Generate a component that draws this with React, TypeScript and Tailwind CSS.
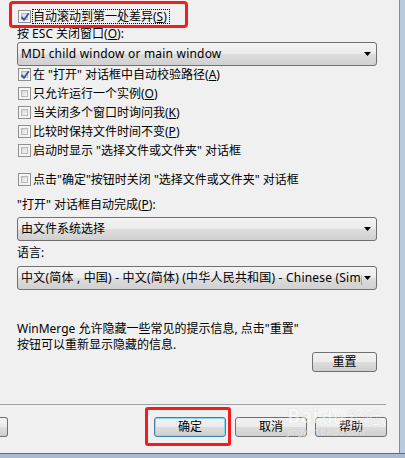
import React from "react";

const U = ({ c }: { c: string }) => <span className="underline underline-offset-[1px]">{c}</span>;

function Checkbox({ checked }: { checked?: boolean }) {
  return (
    <span className="relative block h-[13px] w-[13px] shrink-0 border border-[#8e8f8f] bg-[#f4f4f4]">
      <span className="absolute inset-[2px] border border-[#b8b8b8] bg-[linear-gradient(135deg,#d6d6d6,#f6f6f6)]" />
      {checked && (
        <svg className="absolute left-[1px] top-[1px]" width="10" height="10" viewBox="0 0 10 10">
          <path d="M1.5 5 L4 7.8 L8.8 1.2" fill="none" stroke="#3d56a0" strokeWidth="1.9" />
        </svg>
      )}
    </span>
  );
}

function Row({ checked, children }: { checked?: boolean; children: React.ReactNode }) {
  return (
    <div className="flex h-[19px] items-center pl-[1px]">
      <Checkbox checked={checked} />
      <span className="ml-[2px] whitespace-nowrap leading-[14px]">{children}</span>
    </div>
  );
}

function Select({ children }: { children: React.ReactNode }) {
  return (
    <div className="flex h-[24px] items-center rounded-[3px] border border-[#707070] bg-[linear-gradient(#f3f3f3,#ebebeb_50%,#dddddd_50%,#d0d0d0)] pl-[3px] pr-[5px]">
      <span className="min-w-0 flex-1 overflow-hidden whitespace-nowrap leading-[18px]">{children}</span>
      <svg className="ml-[2px] shrink-0" width="7" height="4" viewBox="0 0 7 4">
        <path d="M0 0H7L3.5 4Z" fill="#000" />
      </svg>
    </div>
  );
}

function Btn({ children, cls = "", focus }: { children?: React.ReactNode; cls?: string; focus?: boolean }) {
  return (
    <div
      className={
        "flex h-[20px] items-center justify-center rounded-[3px] border bg-[linear-gradient(#f2f2f2,#ebebeb_50%,#dddddd_50%,#cfcfcf)] " +
        (focus
          ? "border-[#3c7fb1] shadow-[inset_0_0_0_1px_#8fd7f6] "
          : "border-[#707070] ") +
        cls
      }
    >
      {children}
    </div>
  );
}

export default function App() {
  return (
    <div
      className="flex h-[458px] w-[405px] flex-col overflow-hidden bg-[#f0f0f0] text-[12px] text-black"
      style={{ fontFamily: '"Noto Sans", "Noto Sans CJK SC", sans-serif' }}
    >
      <div className="flex min-h-0 flex-1">
        <div className="relative w-[399px]">
          <div className="pl-[17px] pr-[22px]">
            <div className="mt-[8px] flex h-[17px] items-center pl-[1px]">
              <Checkbox checked />
              <span className="ml-[1px] h-[15px] whitespace-nowrap border border-dotted border-black pr-[2px] leading-[13px]">
                自动滚动到第一处差异(<U c="S" />)
              </span>
            </div>
            <div className="mt-[2px] h-[14px] whitespace-nowrap leading-[14px]">
              按 ESC 关闭窗口(<U c="O" />):
            </div>
            <div className="mt-[1px]">
              <Select>
                <span className="tracking-[0.2px]">MDI child window or main window</span>
              </Select>
            </div>
            <div className="-mt-[1px]">
              <Row checked>
                在 "打开" 对话框中自动校验路径(<U c="A" />)
              </Row>
              <Row>
                只允许运行一个实例(<U c="O" />)
              </Row>
              <Row>
                当关闭多个窗口时询问我(<U c="K" />)
              </Row>
              <Row>
                比较时保持文件时间不变(<U c="P" />)
              </Row>
              <Row>启动时显示 "选择文件或文件夹" 对话框</Row>
            </div>
            <div className="mt-[10px]">
              <Row>点击"确定"按钮时关闭 "选择文件或文件夹" 对话框</Row>
            </div>
            <div className="mt-[9px] h-[14px] whitespace-nowrap leading-[14px]">
              "打开" 对话框自动完成(<U c="P" />):
            </div>
            <div className="mt-[5px]">
              <Select>由文件系统选择</Select>
            </div>
            <div className="mt-[5px] h-[14px] leading-[14px]">语言:</div>
            <div className="mt-[6px]">
              <Select>
                <span className="tracking-[0.2px]">中文(简体 , 中国) - 中文(简体) (中华人民共和国) - Chinese (Simplified, PRC)</span>
              </Select>
            </div>
            <div className="mt-[31px] leading-[16px]">
              <div className="whitespace-nowrap">WinMerge 允许隐藏一些常见的提示信息, 点击"重置"</div>
              <div className="whitespace-nowrap">按钮可以重新显示隐藏的信息.</div>
            </div>
            <div className="-mt-[1px] flex justify-end">
              <Btn cls="w-[65px]">重置</Btn>
            </div>
          </div>
          <div className="mt-[32px] h-px w-[386px] bg-[#a0a0a0]" />
          <div className="mt-[12px] flex">
            <div className="h-[20px] w-[8px] rounded-r-[3px] border border-l-0 border-[#707070] bg-[linear-gradient(#f2f2f2,#ebebeb_50%,#dddddd_50%,#cfcfcf)]" />
            <Btn cls="ml-[146px] w-[72px]" focus>
              确定
            </Btn>
            <Btn cls="ml-[9px] w-[72px]">取消</Btn>
            <Btn cls="ml-[8px] w-[72px]">帮助</Btn>
          </div>

          {/* watermark */}
          <div className="pointer-events-none absolute left-[287px] top-[406px] text-white opacity-50 [text-shadow:0_0_1px_#a8a8a8]">
            <div className="flex items-end leading-none">
              <span className="text-[20px] font-bold">Bai</span>
              <span className="ml-[1px] rounded-[2px] bg-white/60 px-[2px] text-[18px] font-bold">du</span>
              <span className="ml-[2px] text-[17px]">经验</span>
            </div>
            <div className="mt-[1px] text-[9px] leading-none">jingyan.baidu.com</div>
          </div>

          {/* red highlight boxes */}
          <div className="pointer-events-none absolute left-[9px] top-[1px] h-[27px] w-[179px] rounded-[4px] border-[3px] border-[#f31c1c]" />
          <div className="pointer-events-none absolute left-[145px] top-[407px] h-[39px] w-[86px] rounded-[3px] border-[3px] border-[#f31c1c]" />
        </div>
        <div className="w-px bg-[#8a8a8a]" />
        <div className="w-[5px] bg-[#b9c9de]" />
      </div>
      <div className="h-px bg-[#6a6a6a]" />
      <div className="h-[4px] bg-[#a9bbd3]" />
    </div>
  );
}
